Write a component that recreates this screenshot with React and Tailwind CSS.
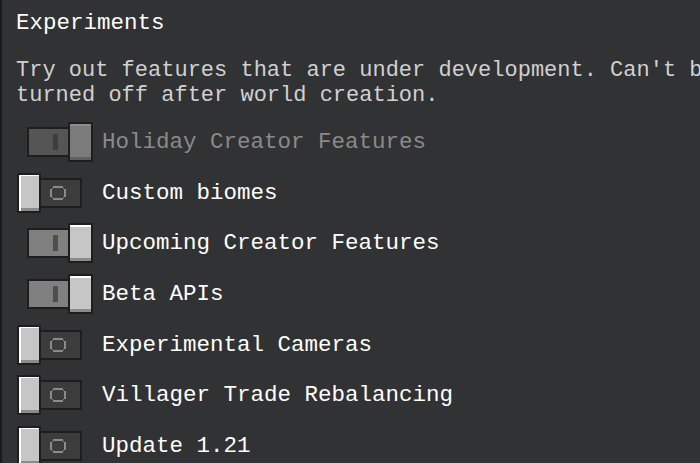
import React from 'react';

const experiments = [
  { label: 'Holiday Creator Features', on: true, disabled: true },
  { label: 'Custom biomes', on: false },
  { label: 'Upcoming Creator Features', on: true },
  { label: 'Beta APIs', on: true },
  { label: 'Experimental Cameras', on: false },
  { label: 'Villager Trade Rebalancing', on: false },
  { label: 'Update 1.21', on: false },
];

// pixel "O" shown on the off track
const OffMark = () => (
  <svg width="16" height="14" viewBox="0 0 16 14" className="block">
    <g fill="#8b8b8b">
      <rect x="3" y="0" width="10" height="2" />
      <rect x="3" y="12" width="10" height="2" />
      <rect x="0" y="3" width="2" height="8" />
      <rect x="14" y="3" width="2" height="8" />
      <rect x="2" y="2" width="1" height="1" />
      <rect x="13" y="2" width="1" height="1" />
      <rect x="2" y="11" width="1" height="1" />
      <rect x="13" y="11" width="1" height="1" />
    </g>
  </svg>
);

const Toggle = ({ on, disabled }) => {
  if (!on) {
    return (
      <div className="ml-[1px] flex items-center">
        <div className="h-[40px] w-[24px] border-2 border-[#1e1e1f] bg-[#c6c6c6] shadow-[inset_2px_1px_0_#ffffff,inset_0_-3px_0_#8b8b8b]" />
        <div className="-ml-[2px] flex h-[30px] w-[43px] items-center border-2 border-[#1e1e1f] bg-[#3c3c3d] pl-[9px]">
          <OffMark />
        </div>
      </div>
    );
  }

  const track = disabled ? 'bg-[#555556]' : 'bg-[#808080]';
  const mark = disabled ? 'bg-[#3e3e3f]' : 'bg-[#4e4e4f]';
  const knob = disabled
    ? 'bg-[#7b7b7b] shadow-[inset_0_2px_0_#8c8c8c,inset_0_-3px_0_#606060]'
    : 'bg-[#c6c6c6] shadow-[inset_0_2px_0_#ffffff,inset_0_-3px_0_#8b8b8b]';

  return (
    <div className="ml-[11px] flex items-center">
      <div className={`flex h-[30px] w-[43px] items-center justify-end border-2 border-[#1e1e1f] pr-[10px] ${track}`}>
        <div className={`h-[16px] w-[5px] ${mark}`} />
      </div>
      <div className={`-ml-[2px] h-[40px] w-[25px] border-2 border-[#1e1e1f] ${knob}`} />
    </div>
  );
};

const App = () => {
  return (
    <div
      className="h-[463px] w-[700px] overflow-hidden border-l-2 border-[#1b1b1c] bg-[#313233] pl-[14px] pt-[11px] text-[22.5px]"
      style={{ fontFamily: '"Liberation Mono", "DejaVu Sans Mono", monospace' }}
    >
      <h1 className="whitespace-nowrap leading-[25px] text-white">Experiments</h1>

      {/* wraps past the window edge in the game too */}
      <div className="mt-[21.5px] whitespace-nowrap text-[22px] leading-[25.5px] text-[#d0d0d0]">
        <p>Try out features that are under development. Can't be</p>
        <p>turned off after world creation.</p>
      </div>

      <div className="mt-[8px] flex flex-col">
        {experiments.map((exp) => (
          <div key={exp.label} className="flex h-[50.7px] items-center">
            <div className="flex w-[86px] shrink-0 items-center">
              <Toggle on={exp.on} disabled={exp.disabled} />
            </div>
            <span
              className={`whitespace-nowrap pt-[1px] leading-[25px] ${exp.disabled ? 'text-[#8a8a8a]' : 'text-white'}`}
            >
              {exp.label}
            </span>
          </div>
        ))}
      </div>
    </div>
  );
};

export default App;
